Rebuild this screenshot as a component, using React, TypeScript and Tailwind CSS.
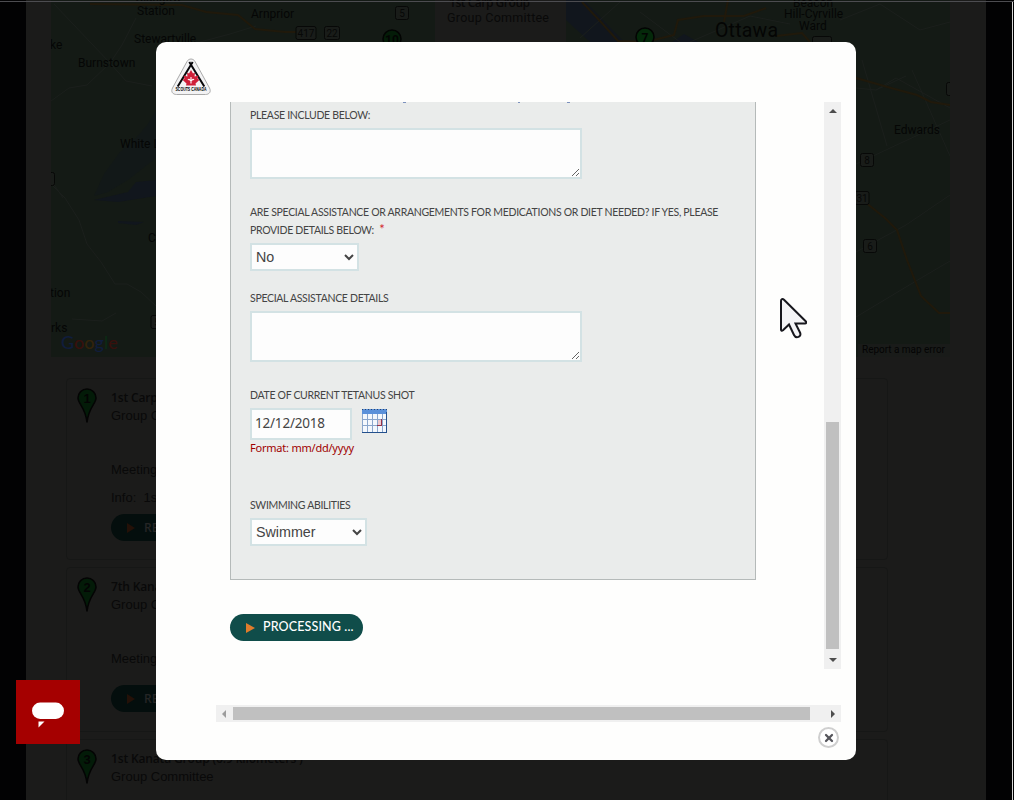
import { X } from "lucide-react";

const groups = [
  { id: 1, name: "1st Carp", role: "Group C", meeting: "Meeting", info: "Info:  1st", action: "RE", height: "h-[182px]" },
  { id: 2, name: "7th Kana", role: "Group C", meeting: "Meeting", info: "", action: "RE", height: "h-[165px]" },
  { id: 3, name: "1st Kanata Group (6.9 kilometers )", role: "Group Committee", meeting: "", info: "", action: "", height: "h-[165px]" },
];

const places = [
  { x: 135, y: 2, text: "Glasgow" },
  { x: 137, y: 15, text: "Station" },
  { x: 251, y: 18, text: "Arnprior" },
  { x: 134, y: 43, text: "Stewartville" },
  { x: 78, y: 67, text: "Burnstown" },
  { x: 120, y: 148, text: "White L" },
  { x: 148, y: 242, text: "C" },
  { x: 50, y: 49, text: "ke" },
  { x: 50, y: 297, text: "tion" },
  { x: 51, y: 332, text: "rks" },
  { x: 793, y: 7, text: "Beacon" },
  { x: 784, y: 18, text: "Hill-Cyrville" },
  { x: 799, y: 30, text: "Ward" },
  { x: 894, y: 134, text: "Edwards" },
];

const shields = [
  { x: 306, y: 33, w: 20, text: "417" },
  { x: 332, y: 33, w: 15, text: "22" },
  { x: 402, y: 13, w: 13, text: "5" },
  { x: 867, y: 160, w: 13, text: "8" },
  { x: 862, y: 198, w: 14, text: "31" },
  { x: 870, y: 246, w: 13, text: "6" },
  { x: 953, y: 89, w: 13, text: "2" },
  { x: 157, y: 322, w: 12, text: "5" },
  { x: 50, y: 179, w: 9, text: "" },
  { x: 822, y: 43, w: 19, text: "" },
];

function MapBackdrop() {
  return (
    <svg className="block h-[357px] w-[899px] shrink-0" viewBox="51 0 899 357" fontFamily="Roboto, sans-serif">
      <rect x="51" width="899" height="357" fill="#141a15" />
      <g fill="#121818">
        <path d="M156 110l-8 14-12 14-16 14-16 22-10 22 14-4 20-12 28-22z" />
      </g>
      <g fill="#11161d">
        <path d="M156 180l-20 2-8 10-34 8 24 2 38-6zM118 221l26 1-8 3-18-2z" />
        <path d="M566 0h18l40 42h-34l-24-22zM672 42l12-8 14 8z" />
      </g>
      <g fill="none" stroke="#1b1f1c" strokeWidth="1">
        <path d="M54 4l56 59 16 18 26 5M110 63l12-18 14-27M51 101l18-13 18-3 23-22M51 184l14 14 14 22 8 24 14 18 14 22 12 0 14 8 15 14M200 42l30-8 26-8M51 180l12 18M72 319l30 2 14-8" />
        <path d="M856 88l20 2 20-12 54 30M862 60l25 86M876 90l30-14M912 70l38 86M856 164l94-44M856 252l50-27 44-30M856 317l60-36 34-20M580 38l40-36M640 12l40 30M690 42l60-26 40 8M840 20l40-16 40 26 30-8" />
      </g>
      <g fill="none" stroke="#20190b" strokeWidth="2">
        <path d="M90 4l92 1 24 7 32 3 17 14 30 3h20" />
        <path d="M582 2l18 19 18 20 28 1 28-7 4-15 26-4h40l22-8M776 36l26-3 8 9M728 0l-4 22" />
        <path d="M856 78l35 10 26 7 14 7 19 3M865 202l20 16 12 12 10 30 14 36 18 17 11 0" />
      </g>
      {/* open info window */}
      <rect x="435" width="131" height="60" fill="#1b1b1a" />
      <text x="449" y="7" fontSize="12" fontWeight="600" fontFamily="Open Sans, sans-serif" fill="#090909" textLength="81">1st Carp Group</text>
      <text x="447" y="22" fontSize="12.500" fill="#090909" textLength="102">Group Committee</text>
      {places.map((p) => (
        <text key={p.text} x={p.x} y={p.y} fontSize="12" fill="#050605">{p.text}</text>
      ))}
      <text x="715" y="37" fontSize="19.500" fill="#040504" textLength="63">Ottawa</text>
      {shields.map((s) => (
        <g key={`${s.x}-${s.y}`}>
          <rect x={s.x - s.w / 2} y={s.y - 6.5} width={s.w} height="13" rx="2" fill="#191c19" stroke="#070807" />
          <text x={s.x} y={s.y + 3.5} fontSize="10" textAnchor="middle" fill="#070807">{s.text}</text>
        </g>
      ))}
      <g stroke="#030403" textAnchor="middle" fontSize="12" fontWeight="700">
        <circle cx="645" cy="37" r="9" fill="#04290a" strokeWidth="1.500" />
        <text x="645" y="42" fill="#030403" stroke="none">7</text>
        <circle cx="392" cy="39" r="9" fill="#041c08" strokeWidth="1.500" />
        <text x="392" y="44" fill="#030403" stroke="none">10</text>
      </g>
      <text x="61" y="349" fontSize="18" fontFamily="Lato, sans-serif" fontWeight="500">
        <tspan fill="#101d3c">G</tspan><tspan fill="#38100c">o</tspan><tspan fill="#33230a">o</tspan><tspan fill="#101d3c">g</tspan><tspan fill="#0b2a14">l</tspan><tspan fill="#38100c">e</tspan>
      </text>
      <rect x="858" y="344" width="92" height="13" fill="#191b19" />
      <text x="862" y="353" fontSize="10" fill="#040404" textLength="83">Report a map error</text>
    </svg>
  );
}

function Pin({ label }: { label: number }) {
  return (
    <svg className="h-9 w-5 shrink-0" viewBox="0 0 20 36">
      <path d="M10 1a9 9 0 0 1 9 9c0 6-7.500 9-9 24.500C8.500 19 1 16 1 10a9 9 0 0 1 9-9z" fill="#031b08" stroke="#040404" strokeWidth="1.500" />
      <text x="10" y="15" textAnchor="middle" fontSize="13" fontWeight="700" fontFamily="Liberation Sans, sans-serif" fill="#040404">{label}</text>
    </svg>
  );
}

function GroupCard({ group }: { group: (typeof groups)[number] }) {
  return (
    <div className={`flex w-[822px] shrink-0 rounded border border-[#161716] pl-[10px] pt-[9px] text-[13px] leading-[17px] text-[#090909] ${group.height}`}>
      <Pin label={group.id} />
      <div className="ml-[14px] mt-px whitespace-pre">
        <div className="font-['Open_Sans',sans-serif] text-[12px] font-semibold tracking-[-0.15px]">{group.name}</div>
        <div className="mt-px">{group.role}</div>
        {group.meeting && <div className="mt-[37px]">{group.meeting}</div>}
        {group.info && <div className="mt-[11px]">{group.info}</div>}
        {group.action && (
          <div className={`flex h-[27px] w-[133px] items-center gap-[9px] rounded-full bg-[#040e0d] pl-4 ${group.info ? "mt-[8px]" : "mt-[18px]"}`}>
            <span className="border-y-[5px] border-l-[8px] border-y-transparent border-l-[#241108]" />
            <span className="font-['Open_Sans',sans-serif] text-[12px] font-semibold text-[#252525]">{group.action}</span>
          </div>
        )}
      </div>
    </div>
  );
}

function ScoutsLogo() {
  return (
    <svg className="h-[38px] w-10" viewBox="0 0 40 38">
      <path d="M16 3.500c1.800-3.300 6.200-3.300 8 0l14.500 26.500c2 4-.5 6.500-4 6.500h-29c-3.500 0-6-2.500-4-6.500z" fill="#f3f3f4" stroke="#aaa" />
      <path d="M18.300 4l15 24.500M21.700 4l-15 24.500" stroke="#08080b" strokeWidth="2" />
      <path d="M20 12l2 3.500 2-1-.5 4 4-1-1 3 1.800 1.500-3.800 3.500.5 2H15l.5-2-3.800-3.500 1.800-1.500-1-3 4 1-.5-4 2 1z" fill="#cf2039" />
      <path d="M20 19v6.500M17 22c1-1.500 2-.5 2.300 1M23 22c-1-1.500-2-.5-2.300 1" fill="none" stroke="#fff" strokeWidth="1.100" />
      <text x="20" y="32.800" fontSize="4.800" fontWeight="700" fontFamily="Liberation Sans, sans-serif" textAnchor="middle" textLength="31" lengthAdjust="spacingAndGlyphs" fill="#000">SCOUTS CANADA</text>
    </svg>
  );
}

function CalendarIcon() {
  return (
    <svg className="h-[25px] w-[26px]" viewBox="0 0 26 25" shapeRendering="crispEdges">
      <rect x="0" y="1" width="25" height="23" fill="#f4f8fd" />
      <rect x="0" y="1" width="25" height="5" fill="#5b91da" />
      <path d="M0 1.500h25" stroke="#27456f" strokeDasharray="1 2" />
      <path d="M15 11h5v6h-5z" fill="#eec9cd" />
      <path d="M.5 6v18M0 11.500h24M0 17.500h24M5.500 6v18M10.500 6v18M15.500 6v18M20.500 6v18" stroke="#8aa6cc" fill="none" />
      <path d="M15 17.500h4.500V11" stroke="#94344a" fill="none" />
      <path d="M0 24.500h25M24.500 4v20" stroke="#24508c" fill="none" />
    </svg>
  );
}

const labelClass = "block whitespace-nowrap font-[Lato,sans-serif] text-[10.500px] leading-[18px] tracking-[-0.310px] text-[#444]";
const fieldClass = "block border-2 border-[#d3e2e4] bg-[#fdfdfd]";

function HealthForm() {
  return (
    <div className="relative h-[478px] w-[526px] border border-t-0 border-[#b5bab9] bg-[#eaeceb] pl-[19px] pt-1">
      <svg className="absolute left-0 top-0 h-px w-full" shapeRendering="crispEdges">
        <path d="M172 .5h3M287 .5h2M336 .5h3" stroke="#7c91bd" />
      </svg>
      <label className={labelClass}>PLEASE INCLUDE BELOW:</label>
      <textarea className={`${fieldClass} mt-1 h-[51px] w-[332px]`} />
      <label className={`${labelClass} mt-6`}>
        ARE SPECIAL ASSISTANCE OR ARRANGEMENTS FOR MEDICATIONS OR DIET NEEDED? IF YES, PLEASE
        <br />
        PROVIDE DETAILS BELOW: <span className="ml-[3px] text-[13px] leading-none text-[#d2232a]">*</span>
      </label>
      <select className={`${fieldClass} mt-1 h-7 w-[109px] font-['Liberation_Sans',sans-serif] text-[14.300px] text-[#444]`}>
        <option>No</option>
      </select>
      <label className={`${labelClass} mt-[18px]`}>SPECIAL ASSISTANCE DETAILS</label>
      <textarea className={`${fieldClass} mt-1 h-[51px] w-[332px]`} />
      <label className={`${labelClass} mt-6`}>DATE OF CURRENT TETANUS SHOT</label>
      <div className="mt-1 flex gap-[10px]">
        <input className={`${fieldClass} h-8 w-[102px] px-[3px] pb-0.5 font-['Noto_Sans',sans-serif] text-[13.500px] tracking-[-0.2px] text-[#444]`} defaultValue="12/12/2018" />
        <CalendarIcon />
      </div>
      <div className="-mt-px font-['Noto_Sans',sans-serif] text-[11px] leading-[17px] tracking-[-0.22px] text-[#a00000]">Format: mm/dd/yyyy</div>
      <label className={`${labelClass} mt-10`}>SWIMMING ABILITIES</label>
      <select className={`${fieldClass} mt-1 h-7 w-[117px] font-['Liberation_Sans',sans-serif] text-[14.300px] text-[#444]`}>
        <option>Swimmer</option>
      </select>
    </div>
  );
}

function RegistrationDialog() {
  return (
    <div className="absolute left-[156px] top-[42px] flex h-[718px] w-[700px] flex-col rounded-[10px] bg-[#fefefd] px-[15px] pt-4">
      <ScoutsLogo />
      <div className="ml-[45px] mt-1.5 flex h-[567px] justify-between">
        <div className="ml-[14px]">
          <HealthForm />
          <button className="mt-[34px] flex h-[27px] w-[133px] items-center rounded-full bg-[#104d4a] pl-4">
            <span className="mr-[8px] border-y-[5.500px] border-l-[9px] border-y-transparent border-l-[#df7c2c]" />
            <span className="whitespace-nowrap font-[Lato,sans-serif] text-[12.500px] font-medium tracking-[0.130px] text-white">PROCESSING ...</span>
          </button>
        </div>
        <div className="flex w-[17px] flex-col items-center justify-between bg-[#f0f0f0] py-[7px]">
          <span className="border-x-[4px] border-b-[4px] border-x-transparent border-b-[#4d4d4d]" />
          <div className="mb-[9px] mt-auto h-[227px] w-[13px] bg-[#c0c0c0]" />
          <span className="border-x-[4px] border-t-[4px] border-x-transparent border-t-[#4d4d4d]" />
        </div>
      </div>
      <div className="ml-[45px] mt-9 flex h-[17px] items-center bg-[#f0f0f0] px-1.5">
        <span className="border-y-[4px] border-r-[4px] border-y-transparent border-r-[#9c9c9c]" />
        <div className="ml-[7px] h-[13px] w-[577px] bg-[#c0c0c0]" />
        <span className="ml-auto border-y-[4px] border-l-[4px] border-y-transparent border-l-[#4d4d4d]" />
      </div>
      <button className="ml-auto mr-[2px] mt-[5px] flex size-[21px] items-center justify-center rounded-full border-2 border-[#cfcfcf] bg-white">
        <X className="size-3 text-[#55555b]" strokeWidth={4.5} />
      </button>
    </div>
  );
}

export default function App() {
  return (
    <div className="relative flex h-[800px] w-[1014px] justify-center overflow-hidden bg-[#020203] pr-[2px] font-['Liberation_Sans',sans-serif]">
      <main className="flex w-[960px] flex-col bg-[#1b1b1a]">
        <div className="ml-[25px]">
          <MapBackdrop />
        </div>
        <div className="ml-10 mt-[21px] flex flex-col gap-[7px]">
          {groups.map((g) => (
            <GroupCard key={g.id} group={g} />
          ))}
        </div>
      </main>

      {/* window frame */}
      <div className="pointer-events-none absolute inset-x-0 top-px h-px bg-[#4c4c50]" />
      <div className="pointer-events-none absolute bottom-0 right-px top-0.5 w-px bg-[#d8d8d8]" />

      <RegistrationDialog />

      <button className="absolute left-4 top-[680px] size-16 bg-[#a50000]">
        <svg viewBox="0 0 64 64">
          <rect x="16" y="22.500" width="32" height="16.500" rx="8.200" fill="#fff" />
          <path d="M22.500 41.500h6l-6 6z" fill="#fff" />
        </svg>
      </button>

      <svg className="pointer-events-none absolute left-[779px] top-[297px] h-[42px] w-7" viewBox="0 0 28 42">
        <path d="M2 4v28.500c0 1.500 1 1.500 2 .7l6-5.700 5 10.500c2 4 8 2 6-2.500l-4.500-9H26c1.500 0 1.500-1.500.7-2.300L5 2.800C3.500 1.300 2 2 2 4z" fill="#f4f4f6" stroke="#17171d" strokeWidth="2" />
      </svg>
    </div>
  );
}
